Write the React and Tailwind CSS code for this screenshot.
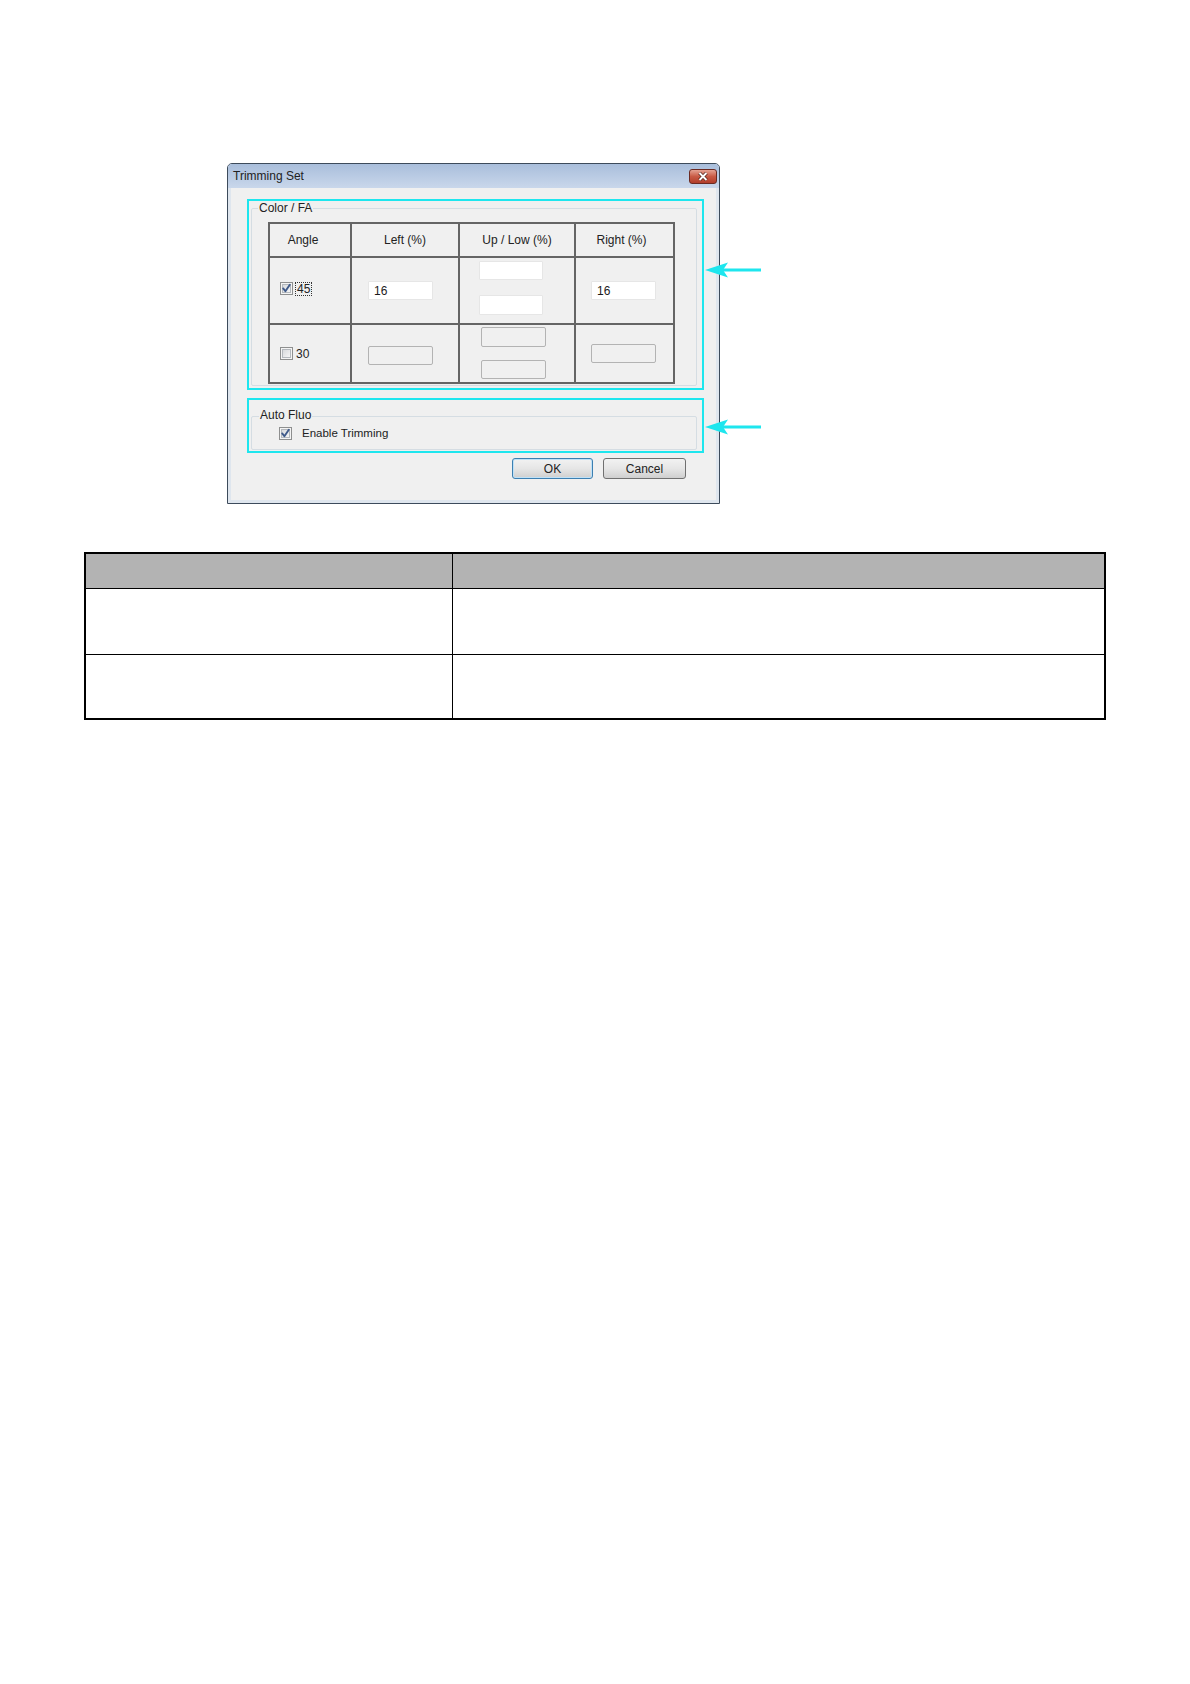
import React from 'react';

const FONT = { fontFamily: '"Liberation Sans", Arial, sans-serif' };

function CheckBox({ checked }) {
  return (
    <svg width="13" height="13" viewBox="0 0 13 13" className="shrink-0">
      <defs>
        <linearGradient id="cbg" x1="0" y1="0" x2="1" y2="1">
          <stop offset="0" stopColor="#d6d8db" />
          <stop offset="1" stopColor="#f7f7f7" />
        </linearGradient>
      </defs>
      <rect x="0.5" y="0.5" width="12" height="12" fill="#f4f4f4" stroke="#8e8f8f" />
      <rect x="2.5" y="2.5" width="8" height="8" fill="url(#cbg)" stroke="#b4b8bd" />
      {checked && (
        <path d="M3.2 6.4 L5.4 9.3 L9.8 2.8" fill="none" stroke="#3f5a8a" strokeWidth="1.9" strokeLinecap="round" strokeLinejoin="round" />
      )}
    </svg>
  );
}

function Field({ value, disabled, w = 65, h = 19 }) {
  return (
    <div
      className={
        disabled
          ? 'border border-[#b3b3b3] bg-[#f0f0f0] rounded-[2px]'
          : 'border border-[#e6e6e6] bg-white rounded-[1px] text-[12px] text-[#1a1a1a] leading-none flex items-center pl-[5px]'
      }
      style={{ width: w, height: h }}
    >
      {value}
    </div>
  );
}

function Arrow() {
  return (
    <svg width="60" height="20" viewBox="0 0 60 20">
      <rect x="18" y="8.5" width="40" height="3" fill="#1ee6ee" />
      <polygon points="2,10 25,2.5 20,10 25,17.5" fill="#1ee6ee" />
    </svg>
  );
}

export default function App() {
  return (
    <div className="relative w-[1190px] h-[1684px] bg-white pt-[163px]" style={FONT}>
      {/* dialog */}
      <div className="ml-[227px] w-[493px] h-[341px] border border-[#3d4b5b] rounded-t-[5px] flex flex-col overflow-hidden">
        <div className="h-[24px] shrink-0 bg-gradient-to-b from-[#a9bedb] to-[#c9d7eb] flex items-center justify-between pl-[5px] pr-[2px]">
          <span className="text-[12px] text-[#222]">Trimming Set</span>
          <div className="w-[28px] h-[15px] rounded-[3px] border border-[#6b2a22] bg-gradient-to-b from-[#e4a293] via-[#c85a45] to-[#b23d2a] flex items-center justify-center">
            <svg width="10" height="9" viewBox="0 0 10 9">
              <path d="M1.5 1 L8.5 8 M8.5 1 L1.5 8" stroke="#4a1a12" strokeWidth="3.4" />
              <path d="M1.5 1 L8.5 8 M8.5 1 L1.5 8" stroke="#ffffff" strokeWidth="2" />
            </svg>
          </div>
        </div>
        <div className="flex-1 bg-[#f0f0f0] border-x-[3px] border-b-[3px] border-[#dfe6ee] pl-[16px] pt-[11px]">
          {/* Color / FA */}
          <div className="w-[457px] h-[191px] border-2 border-[#1ee6ee] pt-[7px] pl-[2px] pr-[5px] pb-[2px]">
            <div className="relative h-full border border-[#d5dde3] rounded-[2px]">
              <span className="absolute -top-[8px] left-[6px] bg-[#f0f0f0] px-[1px] text-[12px] leading-[14px] text-[#222]">Color / FA</span>
              <div className="ml-[16px] mt-[13px] w-[407px] p-[2px] bg-[#656565] grid grid-cols-[80px_106px_114px_97px] grid-rows-[32px_65px_57px] gap-[2px] text-[12px] text-[#222]">
                <div className="bg-[#f0f0f0] flex items-center justify-center pr-[14px]">Angle</div>
                <div className="bg-[#f0f0f0] flex items-center justify-center">Left (%)</div>
                <div className="bg-[#f0f0f0] flex items-center justify-center">Up / Low (%)</div>
                <div className="bg-[#f0f0f0] flex items-center justify-center pr-[6px]">Right (%)</div>

                <div className="bg-[#f0f0f0] flex items-center pl-[10px] pb-[4px] gap-[2px]">
                  <CheckBox checked />
                  <span className="border border-dotted border-[#333] px-[1px] leading-[12px]">45</span>
                </div>
                <div className="bg-[#f0f0f0] flex items-center pl-[16px]">
                  <Field value="16" />
                </div>
                <div className="bg-[#f0f0f0] flex flex-col pl-[19px] pt-[3px] gap-[15px]">
                  <Field w={64} h={19} />
                  <Field w={64} h={20} />
                </div>
                <div className="bg-[#f0f0f0] flex items-center pl-[15px]">
                  <Field value="16" />
                </div>

                <div className="bg-[#f0f0f0] flex items-center pl-[10px] gap-[3px]">
                  <CheckBox />
                  <span>30</span>
                </div>
                <div className="bg-[#f0f0f0] flex items-center pl-[16px] pt-[3px]">
                  <Field disabled />
                </div>
                <div className="bg-[#f0f0f0] flex flex-col pl-[21px] pt-[2px] gap-[13px]">
                  <Field disabled w={65} h={20} />
                  <Field disabled w={65} h={19} />
                </div>
                <div className="bg-[#f0f0f0] flex items-center pl-[15px]">
                  <Field disabled />
                </div>
              </div>
            </div>
          </div>

          {/* Auto Fluo */}
          <div className="mt-[8px] w-[457px] h-[55px] border-2 border-[#1ee6ee] pt-[16px] pl-[2px] pr-[5px] pb-[1px]">
            <div className="relative h-full border border-[#d5dde3] rounded-[2px]">
              <span className="absolute -top-[9px] left-[7px] bg-[#f0f0f0] px-[1px] text-[12px] leading-[14px] text-[#222]">Auto Fluo</span>
              <div className="ml-[27px] mt-[10px] flex items-center gap-[10px]">
                <CheckBox checked />
                <span className="text-[11.5px] leading-[13px] text-[#222]">Enable Trimming</span>
              </div>
            </div>
          </div>

          {/* buttons */}
          <div className="mt-[5px] flex gap-[10px] pl-[265px]">
            <div className="w-[81px] h-[21px] rounded-[3px] border border-[#3c7fb1] bg-gradient-to-b from-[#f2f2f2] via-[#e6e6e6] to-[#cfcfcf] shadow-[inset_0_0_0_1px_#bfe1f7] flex items-center justify-center text-[12px] text-[#222]">OK</div>
            <div className="w-[83px] h-[21px] rounded-[3px] border border-[#707070] bg-gradient-to-b from-[#f2f2f2] via-[#e6e6e6] to-[#cfcfcf] flex items-center justify-center text-[12px] text-[#222]">Cancel</div>
          </div>
        </div>
      </div>

      {/* callout arrows */}
      <div className="absolute left-[703px] top-[260px]">
        <Arrow />
      </div>
      <div className="absolute left-[703px] top-[417px]">
        <Arrow />
      </div>

      {/* description table */}
      <div className="mt-[48px] ml-[84px] w-[1022px] border-2 border-black">
        <div className="grid grid-cols-[367px_1fr] h-[35px] bg-[#b3b3b3] border-b border-black">
          <div className="border-r border-black" />
          <div />
        </div>
        <div className="grid grid-cols-[367px_1fr] h-[66px] border-b border-black">
          <div className="border-r border-black" />
          <div />
        </div>
        <div className="grid grid-cols-[367px_1fr] h-[63px]">
          <div className="border-r border-black" />
          <div />
        </div>
      </div>
    </div>
  );
}
